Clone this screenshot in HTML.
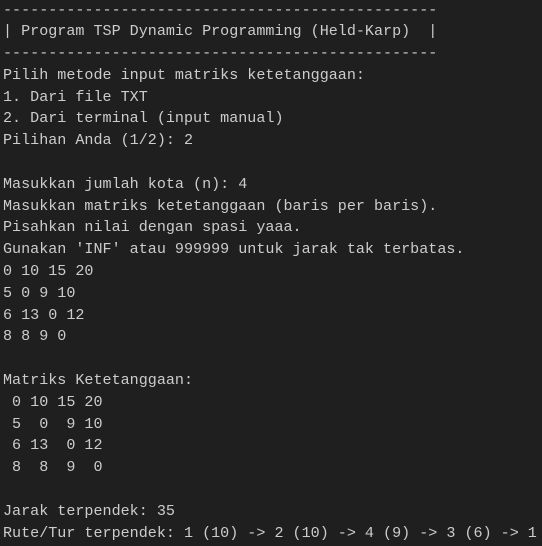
<!DOCTYPE html>
<html><head><style>
html,body{margin:0;padding:0;background:#1f1f1f;width:542px;height:546px;overflow:hidden}
pre{margin:0;padding:0 0 0 3px;font-family:"Liberation Mono",monospace;font-size:15.08px;line-height:21.8px;color:#cccccc;white-space:pre;position:relative;top:-0.5px}
</style></head><body><pre>------------------------------------------------
| Program TSP Dynamic Programming (Held-Karp)  |
------------------------------------------------
Pilih metode input matriks ketetanggaan:
1. Dari file TXT
2. Dari terminal (input manual)
Pilihan Anda (1/2): 2

Masukkan jumlah kota (n): 4
Masukkan matriks ketetanggaan (baris per baris).
Pisahkan nilai dengan spasi yaaa.
Gunakan 'INF' atau 999999 untuk jarak tak terbatas.
0 10 15 20
5 0 9 10
6 13 0 12
8 8 9 0

Matriks Ketetanggaan:
 0 10 15 20
 5  0  9 10
 6 13  0 12
 8  8  9  0

Jarak terpendek: 35
Rute/Tur terpendek: 1 (10) -&gt; 2 (10) -&gt; 4 (9) -&gt; 3 (6) -&gt; 1</pre></body></html>
